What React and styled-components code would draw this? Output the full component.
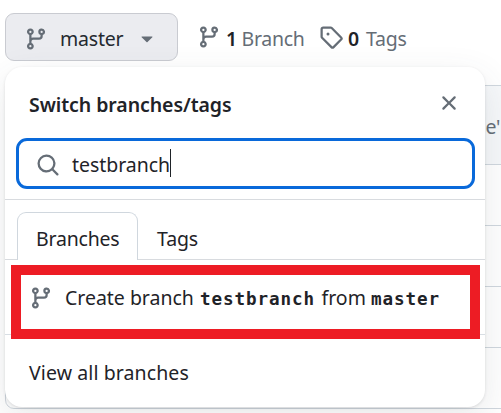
import React from 'react';
import styled, { createGlobalStyle } from 'styled-components';

const GlobalStyle = createGlobalStyle`
  * { box-sizing: border-box; }
  body {
    margin: 0;
    background: #fff;
    color: #1f2328;
    font-family: "Noto Sans", "Open Sans", sans-serif;
    font-size: 19.5px;
    line-height: 30px;
    overflow: hidden;
  }
`;

const PATHS = {
  branch: 'M9.5 3.25a2.25 2.25 0 1 1 3 2.122V6A2.5 2.5 0 0 1 10 8.5H6a1 1 0 0 0-1 1v1.128a2.251 2.251 0 1 1-1.5 0V5.372a2.25 2.25 0 1 1 1.5 0v1.836A2.493 2.493 0 0 1 6 7h4a1 1 0 0 0 1-1v-.628A2.25 2.25 0 0 1 9.5 3.25Zm-6 0a.75.75 0 1 0 1.5 0 .75.75 0 0 0-1.5 0Zm8.25-.75a.75.75 0 1 0 0 1.5.75.75 0 0 0 0-1.5ZM4.25 12a.75.75 0 1 0 0 1.5.75.75 0 0 0 0-1.5Z',
  tag: 'M1 7.775V2.75C1 1.784 1.784 1 2.75 1h5.025c.464 0 .91.184 1.238.513l6.25 6.25a1.75 1.75 0 0 1 0 2.474l-5.026 5.026a1.75 1.75 0 0 1-2.474 0l-6.25-6.25A1.752 1.752 0 0 1 1 7.775Zm1.5 0c0 .066.026.13.073.177l6.25 6.25a.25.25 0 0 0 .354 0l5.025-5.025a.25.25 0 0 0 0-.354l-6.25-6.25a.25.25 0 0 0-.177-.073H2.75a.25.25 0 0 0-.25.25ZM6 5a1 1 0 1 1 0 2 1 1 0 0 1 0-2Z',
  close: 'M3.72 3.72a.75.75 0 0 1 1.06 0L8 6.94l3.22-3.22a.749.749 0 0 1 1.275.326.749.749 0 0 1-.215.734L9.06 8l3.22 3.22a.749.749 0 0 1-.326 1.275.749.749 0 0 1-.734-.215L8 9.06l-3.22 3.22a.751.751 0 0 1-1.042-.018.751.751 0 0 1-.018-1.042L6.94 8 3.72 4.78a.75.75 0 0 1 0-1.06Z',
  search: 'M10.68 11.74a6 6 0 0 1-7.922-8.982 6 6 0 0 1 8.982 7.922l3.04 3.04a.749.749 0 0 1-.326 1.275.749.749 0 0 1-.734-.215ZM11.5 7a4.499 4.499 0 1 0-8.997 0A4.499 4.499 0 0 0 11.5 7Z',
  caret: 'm4.427 7.427 3.396 3.396a.25.25 0 0 0 .354 0l3.396-3.396A.25.25 0 0 0 11.396 7H4.604a.25.25 0 0 0-.177.427Z',
};

const Svg = styled.svg`
  display: block;
  flex: none;
  width: 24px;
  height: 24px;
  fill: #656d76;
`;

const Icon = ({ name, className }) => (
  <Svg className={className} viewBox="0 0 16 16" aria-hidden="true">
    <path d={PATHS[name]} />
  </Svg>
);

const CaretIcon = styled(Icon)`
  margin-bottom: 2px;
`;

const Page = styled.main`
  position: relative;
  width: 501px;
  height: 413px;
  overflow: hidden;
`;

const Toolbar = styled.header`
  display: flex;
  align-items: flex-start;
  height: 85px;
  padding: 13px 0 0 5px;
`;

const BranchButton = styled.button`
  display: flex;
  align-items: center;
  width: 173px;
  height: 48px;
  padding: 3px 17px 0 18px;
  border: 1px solid #c9cbd1;
  border-radius: 9px;
  background: #ebecf0;
  color: #24292f;
  font: inherit;
  text-align: left;
`;

const Label = styled.span`
  flex: none;
  white-space: pre;
  width: ${(p) => (p.$width ? `${p.$width}px` : 'auto')};
  letter-spacing: ${(p) => p.$track || 0}px;
`;

const ButtonLabel = styled(Label)`
  margin: 0 0 0 12px;
`;

const Stat = styled.a`
  display: flex;
  align-items: center;
  height: 24px;
  margin: 12px 0 0 ${(p) => p.$gap}px;
  color: #656d76;
`;

const StatCount = styled.strong`
  width: ${(p) => p.$width}px;
  margin: 3px 0 0 5px;
  color: #1f2328;
  font-weight: 600;
`;

const StatLabel = styled(Label)`
  margin-top: 3px;
`;

const FileTable = styled.section`
  width: 520px;
  height: 324px;
  margin-left: 5px;
  border: 1px solid #d0d7de;
  border-radius: 9px;
`;

const CommitRow = styled.div`
  height: 79px;
  padding: 26px 0 0 479.5px;
  border-bottom: 1px solid #d0d7de;
  background: #f6f8fa;
  color: #656d76;
  letter-spacing: -0.2px;
`;

const FileRow = styled.div`
  height: 61px;
  border-bottom: 1px solid #d0d7de;
`;

const Popover = styled.div`
  position: absolute;
  top: 67px;
  left: 5px;
  display: flex;
  flex-direction: column;
  width: 480px;
  height: 340px;
  border-radius: 17px;
  background: #fff;
  box-shadow: 0 1px 3px rgba(31, 35, 40, 0.12), 0 12px 36px rgba(66, 74, 83, 0.12);
`;

const PopoverHeader = styled.div`
  display: flex;
  justify-content: space-between;
  align-items: center;
  height: 71px;
  padding: 4px 24px 0;
  font-weight: 600;
`;

const CloseIcon = styled(Icon)`
  margin-bottom: 4px;
`;

const SearchField = styled.label`
  display: flex;
  align-items: center;
  flex: none;
  width: 459px;
  height: 51px;
  margin-left: 11px;
  padding: 2px 17px 0;
  border: 3px solid #0969da;
  border-radius: 11px;
`;

const Query = styled(Label)`
  margin: 1px 0 0 12px;
`;

const TextCaret = styled.span`
  width: 1px;
  height: 28px;
  margin-top: -4px;
  background: #1f2328;
`;

const Tabs = styled.div`
  display: flex;
  flex: none;
  height: 61px;
  margin-top: 10px;
  padding: 12px 12px 0;
  border-top: 1px solid #d8dbdf;
  border-bottom: 1px solid #d8dbdf;
`;

const Tab = styled.div`
  height: 48px;
  padding: 11px 18px 0;
  border: 1px solid ${(p) => (p.$active ? '#d0d7de' : 'transparent')};
  border-bottom: 0;
  border-radius: 9px 9px 0 0;
  width: ${(p) => p.$width}px;
  background: ${(p) => (p.$active ? '#fff' : 'transparent')};
`;

const CreateRow = styled.div`
  display: flex;
  align-items: center;
  flex: none;
  height: 74px;
  padding: 2px 24px 0;
`;

const CreateText = styled.div`
  display: flex;
  align-items: baseline;
  margin-left: 12px;
  white-space: pre;
`;

const Code = styled.code`
  flex: none;
  font: 700 17.6px/30px "DejaVu Sans Mono", monospace;
  letter-spacing: 0.92px;
  width: ${(p) => p.$width}px;
`;

const Footer = styled.div`
  flex: 1;
  padding: 23px 24px 0;
  border-top: 1px solid #d8dee4;
`;

const Highlight = styled.div`
  position: absolute;
  top: 265px;
  left: 11px;
  width: 469px;
  height: 74px;
  border: 10px solid #ed1c24;
`;

export default function App() {
  return (
    <>
      <GlobalStyle />
      <Page>
        <Toolbar>
          <BranchButton>
            <Icon name="branch" />
            <ButtonLabel $width={75} $track={-0.2}>master</ButtonLabel>
            <CaretIcon name="caret" />
          </BranchButton>
          <Stat $gap={19}>
            <Icon name="branch" />
            <StatCount $width={15.5}>1</StatCount>
            <StatLabel $width={77} $track={-0.3}>Branch</StatLabel>
          </Stat>
          <Stat $gap={0.5}>
            <Icon name="tag" />
            <StatCount $width={18}>0</StatCount>
            <StatLabel $track={-0.2}>Tags</StatLabel>
          </Stat>
        </Toolbar>
        <FileTable>
          <CommitRow>e'</CommitRow>
          <FileRow />
          <FileRow />
          <FileRow />
        </FileTable>
        <Popover>
          <PopoverHeader>
            <Label $track={-0.07}>Switch branches/tags</Label>
            <CloseIcon name="close" />
          </PopoverHeader>
          <SearchField>
            <Icon name="search" />
            <Query $width={98} $track={-0.05}>testbranch</Query>
            <TextCaret />
          </SearchField>
          <Tabs>
            <Tab $active $width={121}><Label $track={-0.2}>Branches</Label></Tab>
            <Tab $width={80}><Label $track={-0.15}>Tags</Label></Tab>
          </Tabs>
          <CreateRow>
            <Icon name="branch" />
            <CreateText>
              <Label $width={135} $track={-0.02}>Create branch</Label>
              <Code $width={121.5}>testbranch</Code>
              <Label $width={49.5}>from</Label>
              <Code>master</Code>
            </CreateText>
          </CreateRow>
          <Footer><Label $track={0.1}>View all branches</Label></Footer>
        </Popover>
        <Highlight />
      </Page>
    </>
  );
}
